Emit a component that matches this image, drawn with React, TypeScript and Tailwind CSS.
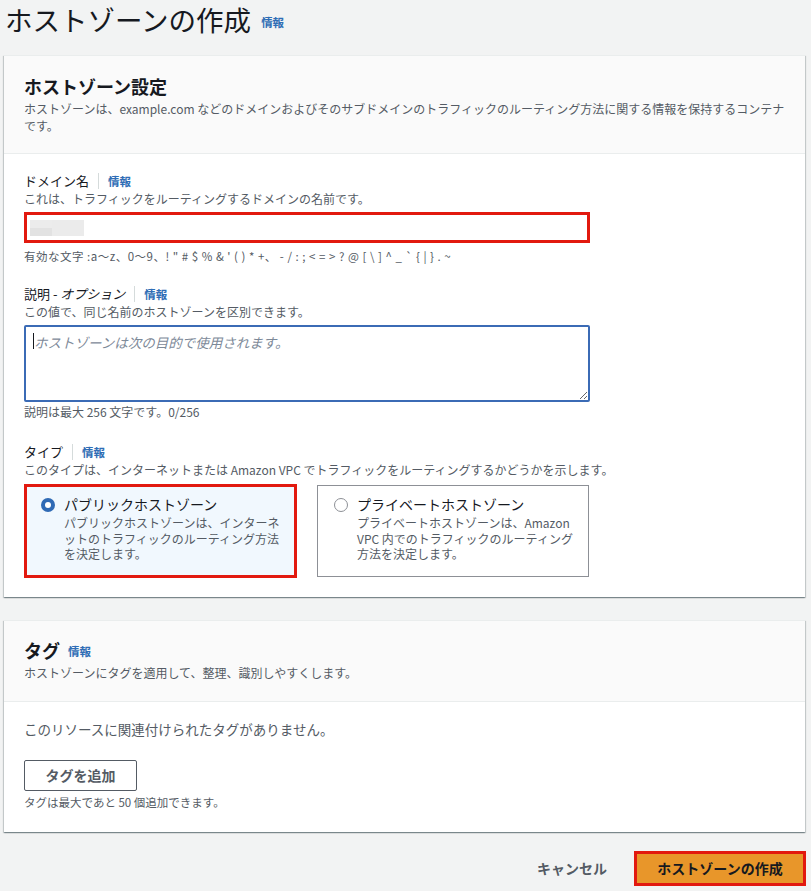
import React from 'react'

const Info = ({ className = '' }: { className?: string }) => (
    <span className={`text-[11.5px] font-bold text-[#2f6db5] ${className}`}>情報</span>
)

function Label({ children }: { children: React.ReactNode }) {
    return (
        <div className="flex items-center h-[18px] text-[13px] leading-[18px] text-[#16191f]">
            <span>{children}</span>
            <span className="mx-[9px] h-[16px] w-px bg-[#d5dbdb]" />
            <Info />
        </div>
    )
}

function RadioCard({ selected, title, children }: { selected?: boolean; title: string; children: React.ReactNode }) {
    return (
        <div
            className={
                selected
                    ? 'h-[94px] w-[273px] border-[3px] border-[#e2190f] bg-[#f1f8fe] pl-[14px] pr-[2px] pt-[8px]'
                    : 'mt-px h-[92px] w-[272px] border border-[#8d9096] bg-white pl-[16px] pr-[2px] pt-[9px]'
            }
        >
            <div className="flex gap-[9px]">
                <div className="pt-[3px]">
                    {selected ? (
                        <div className="flex h-[14px] w-[14px] items-center justify-center rounded-full bg-[#2f6ab5]">
                            <div className="h-[6px] w-[6px] rounded-full bg-white" />
                        </div>
                    ) : (
                        <div className="h-[14px] w-[14px] rounded-full border border-[#8d9096] bg-white" />
                    )}
                </div>
                <div>
                    <div className="text-[14px] leading-[18px] text-[#16191f]">{title}</div>
                    <div className="mt-[2px] whitespace-nowrap text-[12px] leading-[15.5px] text-[#545b64]">{children}</div>
                </div>
            </div>
        </div>
    )
}

export default function App() {
    return (
        <div className="min-h-[891px] bg-[#f2f3f3] pl-[4px] pr-[6px] font-['Noto_Sans_CJK_JP',sans-serif] text-[#16191f]">
            <div className="flex items-end h-[36px] pl-px pt-[2px]">
                <h1 className="text-[27.5px] leading-[34px] font-normal text-[#16191f]">ホストゾーンの作成</h1>
                <Info className="ml-[10px] mb-[5px]" />
            </div>

            <div className="mt-[19px] border-t border-[#eaeded] bg-white shadow-[0_1px_1px_0_rgba(0,28,36,0.3),1px_1px_1px_0_rgba(0,28,36,0.15),-1px_1px_1px_0_rgba(0,28,36,0.15)]">
                <div className="border-b border-[#eaeded] bg-[#fafafa] px-[20px] pt-[19px] pb-[19px]">
                    <h2 className="text-[18px] font-bold leading-[22px]">ホストゾーン設定</h2>
                    <p className="mt-[3px] text-[12px] leading-[17px] text-[#545b64]">
                        ホストゾーンは、example.com などのドメインおよびそのサブドメインのトラフィックのルーティング方法に関する情報を保持するコンテナ
                        <br />
                        です。
                    </p>
                </div>

                <div className="px-[20px] pt-[18px] pb-[19px]">
                    <Label>ドメイン名</Label>
                    <div className="text-[12px] leading-[18px] text-[#545b64]">これは、トラフィックをルーティングするドメインの名前です。</div>
                    <div className="mt-[4px] flex h-[31px] w-[566px] items-center border-[3px] border-[#e2190f] bg-white pl-[3px]">
                        <div className="flex h-[16px]">
                            <div className="w-[22px] flex flex-col">
                                <div className="h-[8px] bg-[#ececec]" />
                                <div className="h-[8px] bg-[#e2e2e2]" />
                            </div>
                            <div className="w-[32px] bg-[#ebebeb]" />
                        </div>
                    </div>
                    <div className="mt-[5px] whitespace-nowrap text-[11.5px] leading-[16px] tracking-[0.5px] text-[#545b64]">
                        有効な文字 :a〜z、0〜9、! " # $ % &amp; ' ( ) * +、 - / : ; &lt; = &gt; ? @ [ \ ] ^ _ ` {'{'} | {'}'} . ~
                    </div>

                    <div className="mt-[21px]">
                        <Label>
                            説明 - <i>オプション</i>
                        </Label>
                    </div>
                    <div className="text-[12px] leading-[18px] text-[#545b64]">この値で、同じ名前のホストゾーンを区別できます。</div>
                    <div className="relative mt-[4px] w-[566px]">
                        <textarea
                            className="block h-[77px] w-full resize-y rounded-[2px] border-2 border-[#3b6bb5] bg-white px-[8px] py-[5px] text-[13.5px] italic leading-[20px] text-[#16191f] outline-none placeholder:text-[#7d8998]"
                            placeholder="ホストゾーンは次の目的で使用されます。"
                        />
                        <div className="absolute left-[9px] top-[8px] h-[16px] w-px bg-[#16191f]" />
                    </div>
                    <div className="mt-[2px] text-[12px] leading-[16px] text-[#545b64]">説明は最大 256 文字です。0/256</div>

                    <div className="mt-[23px]">
                        <Label>タイプ</Label>
                    </div>
                    <div className="text-[12px] leading-[17px] text-[#545b64]">
                        このタイプは、インターネットまたは Amazon VPC でトラフィックをルーティングするかどうかを示します。
                    </div>
                    <div className="mt-[6px] flex items-start gap-[20px]">
                        <RadioCard selected title="パブリックホストゾーン">
                            パブリックホストゾーンは、インターネ
                            <br />
                            ットのトラフィックのルーティング方法
                            <br />
                            を決定します。
                        </RadioCard>
                        <RadioCard title="プライベートホストゾーン">
                            プライベートホストゾーンは、Amazon
                            <br />
                            VPC 内でのトラフィックのルーティング
                            <br />
                            方法を決定します。
                        </RadioCard>
                    </div>
                </div>
            </div>

            <div className="mt-[23px] border-t border-[#eaeded] bg-white shadow-[0_1px_1px_0_rgba(0,28,36,0.3),1px_1px_1px_0_rgba(0,28,36,0.15),-1px_1px_1px_0_rgba(0,28,36,0.15)]">
                <div className="border-b border-[#eaeded] bg-[#fafafa] px-[20px] pt-[18px] pb-[19px]">
                    <div className="flex items-end gap-[8px]">
                        <h2 className="text-[18px] font-bold leading-[22px]">タグ</h2>
                        <Info className="mb-[1px]" />
                    </div>
                    <p className="mt-[3px] text-[12px] leading-[18px] text-[#545b64]">ホストゾーンにタグを適用して、整理、識別しやすくします。</p>
                </div>
                <div className="px-[20px] pt-[17px] pb-[22px]">
                    <div className="text-[13.5px] leading-[20px] text-[#545b64]">このリソースに関連付けられたタグがありません。</div>
                    <button className="mt-[21px] h-[31px] w-[113px] rounded-[2px] border border-[#545b64] bg-white text-[14px] font-bold text-[#545b64]">
                        タグを追加
                    </button>
                    <div className="mt-[3px] text-[11.5px] leading-[16px] text-[#545b64]">タグは最大であと 50 個追加できます。</div>
                </div>
            </div>

            <div className="mt-[19px] flex items-center justify-end gap-[27px] -mr-px">
                <button className="text-[14px] font-bold text-[#545b64]">キャンセル</button>
                <button className="h-[35px] w-[172px] border-[3px] border-[#e2190f] bg-[#e8962a] text-[14px] font-bold text-[#16191f]">
                    ホストゾーンの作成
                </button>
            </div>
        </div>
    )
}
